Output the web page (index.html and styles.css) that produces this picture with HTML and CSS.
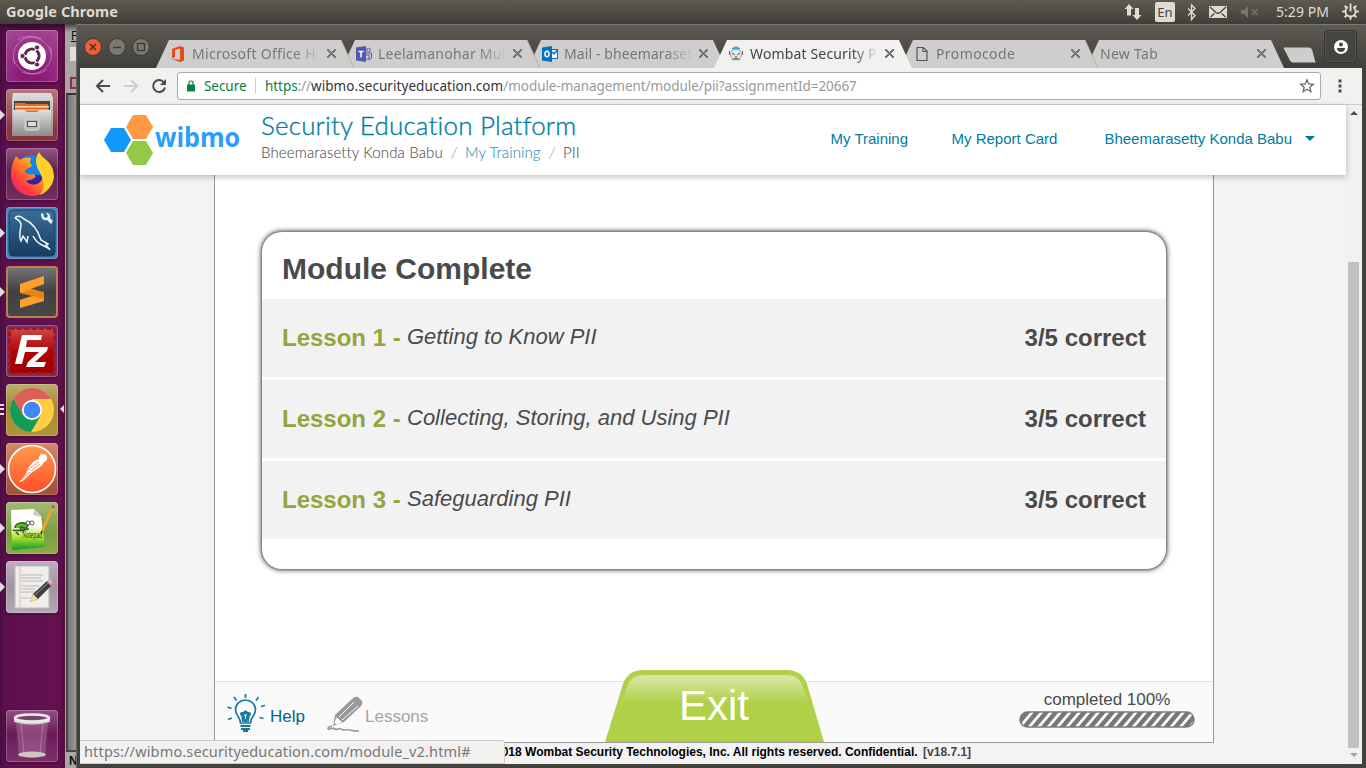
FILE: index.html
```html
<!DOCTYPE html>
<html lang="en">
<head>
<meta charset="utf-8">
<title>Wombat Security Platform</title>
<link rel="stylesheet" href="styles.css">
</head>
<body>
<div class="desktop">
  <header class="panel">
    <span class="panel-title">Google Chrome</span>
    <div class="tray">
      <svg class="net" width="18" height="18" viewBox="0 0 18 18"><path d="M5 1 0.500 6H3v6.500h4V6h2.500zM13 17l4.500-5H15V5h-4v7H8.500z" fill="#dfdbd2"/></svg>
      <span class="lang">En</span>
      <svg class="bt" width="10" height="18" viewBox="0 0 10 18"><path d="M1 5.500l7 7-3.500 4V2L8 5.500l-7 7" fill="none" stroke="#dfdbd2" stroke-width="1.400"/></svg>
      <svg class="mail" width="18" height="12" viewBox="0 0 18 12"><rect width="18" height="12" rx="1" fill="#dfdbd2"/><path d="M1 1l6 5.500q2 1.500 4 0L17 1M1.500 11l4-3.500M16.500 11l-4-3.500" fill="none" stroke="#45443f" stroke-width="1.300"/></svg>
      <svg class="mute" width="18" height="12" viewBox="0 0 18 12"><path d="M0 4h3l4-4v12L3 8H0z" fill="#77756d"/><path d="M11 3.500l5.500 5.500M16.500 3.500L11 9" stroke="#77756d" stroke-width="1.500"/></svg>
      <span class="clock">5:29 PM</span>
      <svg class="gear" width="17" height="17" viewBox="-8.500 -8.500 17 17"><circle r="5" fill="none" stroke="#dfdbd2" stroke-width="1.800"/><path d="M3.800-3.800l2-2M5.500 0H8.300M3.800 3.800l2 2M0 5.500V8.300M-3.800 3.800l-2 2M-5.500 0h-2.800M-3.800-3.800l-2-2" stroke="#dfdbd2" stroke-width="2"/><path d="M0-8V-2" stroke="#4f4d45" stroke-width="5"/><path d="M0-8V0" stroke="#dfdbd2" stroke-width="2"/></svg>
    </div>
  </header>

  <div class="workspace">
    <nav class="launcher">
      <div class="tile dash"><svg viewBox="0 0 52 52"><g fill="none" stroke="#e9b9df" stroke-opacity=".45" stroke-width="1"><path d="M9 34C2 16 20 1 36 9M44 17c7 18-12 32-28 25M12 10c12-9 32 1 33 14M41 39c-14 12-31 0-34-10"/></g><circle cx="26" cy="26" r="14" fill="#fff"/><circle cx="26" cy="26" r="7" fill="none" stroke="#5e2750" stroke-width="3.200"/><g stroke="#fff" stroke-width="1.500"><path d="M26 26H14M26 26l6-10M26 26l6 10"/></g><circle cx="26" cy="26" r="5.500" fill="#fff"/><g fill="#5e2750" stroke="#fff" stroke-width=".8"><circle cx="16.500" cy="26" r="2.500"/><circle cx="31" cy="17.500" r="2.500"/><circle cx="31" cy="34.500" r="2.500"/></g></svg></div>
      <div class="tile files run"><svg viewBox="0 0 52 52"><defs><linearGradient id="steel" x2="0" y2="1"><stop stop-color="#dedede"/><stop offset="1" stop-color="#8c8c8c"/></linearGradient></defs><path d="M7 4h38l2 5v38H6V9z" fill="url(#steel)"/><path d="M8 12h36v12H8z" fill="#454545"/><path d="M9 14h10l1 1h22v8H9z" fill="#e36b2b"/><path d="M9 17h34v1.500H9z" fill="#ffd49b"/><path d="M9 20h34v2H9z" fill="#f4a04f"/><path d="M7 21h11l3 2h10l3-2h11v26H7z" fill="url(#steel)"/><rect x="19" y="30" width="14" height="11" rx="2" fill="#b8b8b8" stroke="#ddd"/><rect x="21.500" y="32.500" width="9" height="5" fill="#ddd" stroke="#555"/></svg></div>
      <div class="tile firefox"><svg viewBox="0 0 52 52"><defs><linearGradient id="fox" x1="1" x2="0" y2="1"><stop stop-color="#fff44f"/><stop offset=".4" stop-color="#ff9a20"/><stop offset=".72" stop-color="#ff3b43"/><stop offset="1" stop-color="#e31587"/></linearGradient></defs><circle cx="26" cy="26" r="19" fill="#1683e5"/><path d="M21 27h14l3 7-9 7-9-5z" fill="#32249b"/><path d="M10 8l4 4c4-3 8-3 11-2l-1 4 2 4c-2 2-6 2-7 5 0 3 5 4 8 3l3 2c-2 4-7 4-10 5 5 6 14 4 16-2 2-8-6-14-4-23 13 4 16 14 15 21-2 11-10 19-21 19S5 39 5 27c0-8 2-13 5-19z" fill="url(#fox)"/><path d="M33 4c4 8 15 10 15 25-1 9-7 15-14 18 7-10 2-18-1-24-4-7-4-13 0-19z" fill="#ffcf2a"/></svg></div>
      <div class="tile mysql run"><svg viewBox="0 0 52 52"><defs><linearGradient id="sea" x2="0" y2="1"><stop stop-color="#3b6e98"/><stop offset="1" stop-color="#143c60"/></linearGradient></defs><rect x="3" y="3" width="46" height="46" rx="4" fill="url(#sea)" stroke="#174165"/><path d="M9 11c2-3 6-2 9 1 9 4 14 11 17 21l7 4-2 1 4 5M44 42l-8-4c-4-2-7-5-9-9M9 11c2 1 5 3 6 6 0 6-3 11 0 17l2-5 4 6 1-6" fill="none" stroke="#edf7ff" stroke-width="1.500"/><path d="M37 6l1 4 2 1 2-2-2-3c3 0 5 2 4 5l3 3-2 3-4-4c-4 1-6-2-6-6z" fill="#e7f1f9"/></svg></div>
      <div class="tile sublime run"><svg viewBox="0 0 52 52"><path d="M14 34l24-8v9l-24 7z" fill="#ffa02d"/><path d="M14 20l24 6v7l-24-6z" fill="#e88414"/><path d="M14 18L38 10v8l-24 9z" fill="#ffa02d"/></svg></div>
      <div class="tile zilla"><svg viewBox="0 0 52 52"><defs><linearGradient id="red" x2="0" y2="1"><stop stop-color="#cf4444"/><stop offset=".5" stop-color="#b20606"/><stop offset="1" stop-color="#900"/></linearGradient></defs><rect x="4" y="4" width="44" height="44" fill="url(#red)"/><rect x="3.500" y="3.500" width="45" height="45" fill="none" stroke="#ad1414" stroke-width="3" stroke-dasharray="4.500 3"/><path d="M16 10h20l-1 5H21l-1 7h11l-1 5H19l-3 12H9z" fill="#fff"/><path d="M25 22h17l-1 4-12 11h11l-2 5H20l2-5 11-10h-9z" fill="#fff"/></svg></div>
      <div class="tile chrome run3 active"><svg viewBox="0 0 52 52"><circle cx="26" cy="26" r="22" fill="#ffcd40"/><path d="M7 15a22 22 0 0 1 38 0H26L15 32z" fill="#db6158"/><path d="M7 15a22 22 0 0 0 18 33l10-17-9 4-9-4z" fill="#119c59"/><circle cx="26" cy="26" r="10" fill="#fff"/><circle cx="26" cy="26" r="8.300" fill="#4285f4"/></svg></div>
      <div class="tile postman run"><svg viewBox="0 0 52 52"><defs><linearGradient id="post" x2="0" y2="1"><stop stop-color="#ff9a52"/><stop offset="1" stop-color="#ff4f24"/></linearGradient></defs><circle cx="26" cy="26" r="23.500" fill="url(#post)" stroke="#fff" stroke-width="1.600"/><circle cx="37" cy="15" r="4" fill="#fff"/><path d="M33 16c-6 1-11 8-13 15l-7 8 4-1 8-8c6-4 12-7 13-12z" fill="#fff"/><path d="M22 27l11-8M25 28l9-7M15 37l9-8" stroke="#ff6b32" stroke-width=".8" fill="none"/></svg></div>
      <div class="tile npp run"><svg viewBox="0 0 52 52"><defs><linearGradient id="grass" x2="0" y2="1"><stop offset=".4" stop-color="#fff"/><stop offset=".68" stop-color="#b3e437"/><stop offset="1" stop-color="#0a9b20"/></linearGradient></defs><path d="M5 8l23-1 7 7 4 31-33 3z" fill="url(#grass)"/><path d="M28 7l-1 6 8 2z" fill="#ccc"/><path d="M7 28c6 2 12-1 16-1M9 26c0-5 8-7 13-3l-2 4c-4 4-7 0-5-2l4 1M10 30l3 3" stroke="#2d5b16" stroke-width="1.500" fill="#62b735"/><circle cx="22" cy="21" r="2" fill="#fff" stroke="#333" stroke-width=".8"/><circle cx="26" cy="21" r="2" fill="#fff" stroke="#333" stroke-width=".8"/><text class="npp-word" x="16" y="36" textLength="20" lengthAdjust="spacingAndGlyphs">Notepad</text><path d="M36 30L47 4" stroke="#f1a32b" stroke-width="2.500"/><path d="M46.500 6l1-2.500" stroke="#b55" stroke-width="3"/><path d="M35 32l1-3" stroke="#433" stroke-width="1.500"/></svg></div>
      <div class="tile editor run"><svg viewBox="0 0 52 52"><rect x="9" y="5" width="34" height="42" fill="#eeeeec" stroke="#bbb"/><path d="M14 6v40" stroke="#e5a8a8" stroke-width=".8"/><path d="M15 14h22M15 17h20M15 20h22M15 25h18M15 28h14M15 31h16M15 37h9" stroke="#aaa" stroke-width=".8"/><path d="M24 41l3-8 14-13 4 5-13 13z" fill="#3d3d3d"/><path d="M24 41l3-8 5 5z" fill="#f3df9c"/><path d="M41 20l3-3 3 4-3 3z" fill="#e6a3d5"/><path d="M29 34l13-12" stroke="#999"/></svg></div>
      <div class="tile trash"><svg viewBox="0 0 52 52"><path d="M10 12h32l-3 34q-13 4-26 0z" fill="#c592ba" opacity=".35"/><ellipse cx="26" cy="44.500" rx="14" ry="3" fill="#c9c9c2"/><path d="M15 14l3 29M37 14l-3 29" stroke="#fff" opacity=".25"/><path d="M8 8v4q18 5 36 0V8z" fill="#d5d5d0"/><ellipse cx="26" cy="8" rx="17" ry="3.500" fill="#764270" stroke="#ededea" stroke-width="2.500"/></svg></div>
    </nav>

    <aside class="behind"><span class="behind-top">F</span><i class="behind-box"></i><i class="behind-icon"></i><i class="behind-body"></i><span class="behind-bottom">N</span></aside>

    <section class="window">
      <div class="titlebar">
        <div class="controls">
          <svg viewBox="0 0 18 18"><circle cx="9" cy="9" r="8.500" fill="#ec5e37" stroke="#3b3a36"/><path d="M6 6l6 6M12 6l-6 6" stroke="#45241b" stroke-width="1.400"/></svg>
          <svg viewBox="0 0 18 18"><circle cx="9" cy="9" r="8.500" fill="#7a7871" stroke="#3b3a36"/><path d="M5 9.500h8" stroke="#3b3a36" stroke-width="1.300"/></svg>
          <svg viewBox="0 0 18 18"><circle cx="9" cy="9" r="8.500" fill="#7a7871" stroke="#3b3a36"/><rect x="5.500" y="5.500" width="7" height="7" fill="none" stroke="#3b3a36" stroke-width="1.300"/></svg>
        </div>
        <div class="tabs">
          <div class="tab t1"><svg class="shape" viewBox="0 0 198 28"><path d="M0 28L13 0H185L198 28z"/><path class="edge" d="M185 0l13 28"/></svg><svg class="fav" viewBox="0 0 16 16"><path d="M2 3l8-3 4 1.500v13L10 16l-8-3 8 .800V2.500L5 4v7l-3 1.500z" fill="#e64a19"/></svg><span class="label l1">Microsoft Office H</span><b class="x"></b></div>
          <div class="tab t2"><svg class="shape" viewBox="0 0 198 28"><path d="M0 28L13 0H185L198 28z"/><path class="edge" d="M185 0l13 28"/></svg><svg class="fav" viewBox="0 0 16 16"><path d="M0 1.500L10 0v16L0 14.500z" fill="#5558af"/><path d="M2.500 5.500h5M5 5.500v6" stroke="#fff" stroke-width="1.500"/><circle cx="12.500" cy="4" r="1.800" fill="none" stroke="#5558af"/><path d="M10 7h5.500v5q-2 2-5 1M10 9h3v4" fill="none" stroke="#5558af"/></svg><span class="label l2">Leelamanohar Mul</span><b class="x"></b></div>
          <div class="tab t3"><svg class="shape" viewBox="0 0 198 28"><path d="M0 28L13 0H185L198 28z"/></svg><svg class="fav" viewBox="0 0 16 16"><path d="M0 1.500L10 0v16L0 14.500z" fill="#0072c6"/><ellipse cx="5" cy="8" rx="2" ry="2.800" fill="none" stroke="#fff" stroke-width="1.500"/><path d="M10 3.500h5.500v9H10M10 6l2 2 3.500-4" fill="#fff" stroke="#0072c6" stroke-width="1.200"/></svg><span class="label l3">Mail - bheemaraset</span><b class="x"></b></div>
          <div class="tab t4 current"><svg class="shape" viewBox="0 0 198 28"><path d="M0 28L13 0H185L198 28z"/></svg><svg class="fav" viewBox="0 0 16 16"><circle cx="8" cy="8.500" r="5.500" fill="#e4e6e7" stroke="#a2a6a9"/><path d="M4 3Q5 1 8 1t4 2Q8 2 4 3" fill="#23a7df" stroke="#23a7df"/><path d="M4.500 7l2 2M11.500 7l-2 2M6 12l2 1 2-1M7.300 10.500h1.400" stroke="#333" fill="none"/><path d="M1.500 5v4M14.500 5v4M4 13l2 1M12 13l-2 1" stroke="#777" stroke-width="1.200"/></svg><span class="label l4">Wombat Security P</span><b class="x"></b></div>
          <div class="tab t5"><svg class="shape" viewBox="0 0 198 28"><path d="M0 28L13 0H185L198 28z"/><path class="edge" d="M185 0l13 28"/></svg><svg class="fav" viewBox="0 0 16 16"><path d="M3 1.500h6.500L13 5v9.500H3zM9 1.500V5.500h4" fill="none" stroke="#555" stroke-width="1.200"/></svg><span class="label l5">Promocode</span><b class="x"></b></div>
          <div class="tab t6"><svg class="shape" viewBox="0 0 198 28"><path d="M0 28L13 0H185L198 28z"/></svg><span class="label l6">New Tab</span><b class="x"></b></div>
        </div>
        <svg class="newtab" width="33" height="16" viewBox="0 0 33 16"><path d="M1 .5h25q2 0 3 2L32.500 15.500H10q-2 0-3-2L.5 1z" fill="#cfcdcb"/></svg>
        <div class="profile"><svg width="14" height="14" viewBox="0 0 14 14"><circle cx="7" cy="7" r="7" fill="#fff"/><circle cx="7" cy="4.500" r="2" fill="#45443f"/><path d="M3 8h8v1q-1 3-4 3T3 9z" fill="#45443f"/></svg></div>
      </div>

      <div class="toolbar">
        <svg class="nav" viewBox="0 0 16 16"><path d="M15 8H2M8 2L2 8l6 6" fill="none" stroke="#4b4b4b" stroke-width="2"/></svg>
        <svg class="nav" viewBox="0 0 16 16"><path d="M1 8h13M8 2l6 6-6 6" fill="none" stroke="#cecece" stroke-width="2"/></svg>
        <svg class="nav" viewBox="0 0 16 16"><path d="M13 4.500A6 6 0 1 0 14 9.500" fill="none" stroke="#4b4b4b" stroke-width="2"/><path d="M15 1v6H9z" fill="#4b4b4b"/></svg>
        <div class="omnibox">
          <svg class="lock" width="8" height="12" viewBox="0 0 8 12"><path d="M2 6V3q0-2 2-2t2 2v3" fill="none" stroke="#0b8043" stroke-width="1.200"/><rect y="4.500" width="8" height="7" rx=".8" fill="#0b8043"/></svg>
          <span class="secure">Secure</span><i class="divider"></i>
          <span class="url"><span class="scheme">https</span>://<span class="host">wibmo.securityeducation.com</span>/module-management/module/pii?assignmentId=20667</span>
          <svg class="star" width="16" height="16" viewBox="0 0 16 16"><path d="M8 1.800l1.700 4.200 4.600.3-3.500 2.900 1.100 4.500L8 11.300l-3.900 2.400 1.100-4.500-3.500-2.900 4.600-.3z" fill="none" stroke="#6a6a6a" stroke-width="1.300"/></svg>
        </div>
        <svg class="more" width="4" height="14" viewBox="0 0 4 14"><path d="M.5.500h3v3h-3zM.5 5.500h3v3h-3zM.5 10.500h3v3h-3z" fill="#4b4b4b"/></svg>
      </div>

      <div class="viewport">
        <main class="page">
          <header class="site-header">
            <svg class="logo" width="138" height="52" viewBox="0 0 138 52"><path d="M8 14h13l7 12-7 12H8L1 26z" fill="#1198fb"/><path d="M30 1h13l7 12-7 12H30l-7-12z" fill="#ff9944"/><path d="M30 27h13l7 12-7 12H30l-7-12z" fill="#93c947"/><text class="wordmark" x="52" y="33" textLength="85" lengthAdjust="spacingAndGlyphs">wibmo</text></svg>
            <div class="brand">
              <div class="brand-title">Security Education Platform</div>
              <div class="crumbs"><span class="c1">Bheemarasetty Konda Babu</span><i>/</i><a class="c2">My Training</a><i>/</i><span class="c3">PII</span></div>
            </div>
            <nav class="menu"><a>My Training</a><a>My Report Card</a><a class="user">Bheemarasetty Konda Babu<i class="caret"></i></a></nav>
          </header>
          <div class="module">
            <section class="results">
              <h1>Module Complete</h1>
              <div class="lesson"><strong>Lesson 1 -</strong><em>Getting to Know PII</em><b>3/5 correct</b></div>
              <div class="lesson"><strong>Lesson 2 -</strong><em>Collecting, Storing, and Using PII</em><b>3/5 correct</b></div>
              <div class="lesson"><strong>Lesson 3 -</strong><em>Safeguarding PII</em><b>3/5 correct</b></div>
            </section>
            <footer class="module-bar">
              <svg class="bulb" width="40" height="40" viewBox="0 0 40 40"><g fill="none" stroke="#177a9d" stroke-width="1.700"><path d="M14.500 30c0-6-5-7-5-13.500a10 9.500 0 0 1 20 0c0 6.500-5 7.500-5 13.500z"/><path d="M17 29l-1-8M22 29l1-8M17 19l2 10M22 19l-2 10"/><path d="M14.500 33h10M15 36h9M17 38h5" stroke-width="2"/><path d="M19.500 1v4M8 4l2.500 3.500M32.500 4L30 7.500M1.500 14l4 1.500M35 13.500l4-1M2 26.500l4-1.500M33.500 24.500l4 1"/></g><g fill="#177a9d"><circle cx="16" cy="21" r="2"/><circle cx="19.500" cy="19.500" r="2"/><circle cx="23" cy="21" r="2"/></g></svg>
              <a class="help">Help</a>
              <svg class="pencil" width="36" height="36" viewBox="0 0 36 36"><path d="M8 19L25 3q3-3 6-2l4 4q1 3-1 5L17 26 6 30z" fill="#999"/><path d="M12 21L27 6M15 24L31 10" stroke="#fafafa" stroke-width="1"/><path d="M9 21.500l-1.500 5.500 2 1.500 5.500-2q-.500-2-2.500-2.500-1-2-3.500-2.500z" fill="#fafafa"/><path d="M5 30c-5 1-5 4-2 3 5-3 4 2 8 0 3-2 3 2 7 1 4-1 6 1 14 1" fill="none" stroke="#999" stroke-width="1.600"/></svg>
              <a class="lessons">Lessons</a>
              <a class="exit"><svg width="219" height="72" viewBox="0 0 219 72"><defs><linearGradient id="gloss" x2="0" y2="1"><stop offset=".1" stop-color="#d5e59f"/><stop offset=".85" stop-color="#b0d047"/></linearGradient></defs><path d="M0 72L18 14Q23 0 38 0h144q15 0 20 14l17 58z" fill="#b0d047"/><path d="M16 34l6-17Q26 5 38 5h144q12 0 16 12l6 17v4H16z" fill="url(#gloss)"/></svg><span>Exit</span></a>
              <div class="progress"><span>completed 100%</span><svg width="176" height="17" viewBox="0 0 176 17"><defs><pattern id="stripes" width="9.450" height="17" patternUnits="userSpaceOnUse" patternTransform="skewX(-40)"><rect width="9.450" height="17" fill="#777"/><rect width="3.600" height="17" x="3" fill="#fff"/></pattern></defs><rect x="1" y="1" width="174" height="15" rx="7.500" fill="url(#stripes)" stroke="#7b7b7b" stroke-width="1.500"/></svg></div>
            </footer>
          </div>
          <div class="copyright"><b>2018 Wombat Security Technologies, Inc. All rights reserved. Confidential.</b><b class="version">[v18.7.1]</b></div>
        </main>
        <div class="scroll"><i class="up"></i><i class="thumb"></i><i class="down"></i></div>
        <div class="status">https://wibmo.securityeducation.com/module_v2.html#</div>
      </div>
    </section>
  </div>
</div>
</body>
</html>
```
FILE: styles.css
```css
* { box-sizing: border-box; }
body { margin: 0; overflow: hidden; font-family: "Liberation Sans", Arial, sans-serif; }
.desktop { width: 1366px; height: 768px; display: flex; flex-direction: column; background: #3f3e3a; }
.panel { height: 24px; display: flex; align-items: center; justify-content: space-between; padding: 0 7px 2px 6px; background: linear-gradient(#5d5a50, #3f3e39); color: #dfdbd2; font-family: "Noto Sans", sans-serif; font-size: 14px; }
.panel-title { font-weight: 700; font-size: 14.5px; letter-spacing: .05px; }
.tray { display: flex; align-items: center; padding-top: 1px; }
.lang { width: 20px; height: 20px; margin: 0 12px 0 13px; border-radius: 2px; background: #dfdbd2; color: #45443f; font-size: 13px; line-height: 20px; text-align: center; }
.bt { margin-right: 12px; }
.mail { margin-right: 14px; }
.mute { margin-right: 17px; }
.clock { width: 53px; margin-right: 13px; letter-spacing: .05px; white-space: nowrap; }
.workspace { flex: 1; display: flex; min-height: 0; }

.launcher { width: 65px; padding: 6px 0 6px 6px; display: flex; flex-direction: column; gap: 7px; background: linear-gradient(90deg, #5a104d, #67114f); border-right: 1px solid #521046; box-shadow: inset 0 4px 5px #370a30; }
.tile { position: relative; width: 52px; height: 52px; flex: none; border-radius: 4px; box-shadow: inset 0 0 0 1px rgba(255,255,255,.22), 0 1px 3px rgba(0,0,0,.35); }
.tile svg { display: block; width: 52px; height: 52px; }
.dash { background: radial-gradient(circle at 50% 90%, #8c1b77 20%, #a64b94); }
.files { background: linear-gradient(#b7787b, #8a343e 80%); }
.firefox { background: linear-gradient(#90577f, #602050 45%, #72305f); }
.mysql { background: #4b83b5; }
.sublime { background: linear-gradient(#777, #414141 50%, #484848); box-shadow: inset 0 0 0 2px #b8824c; }
.zilla { background: #773268; }
.chrome { background: linear-gradient(#bcae70, #a68931 45%, #b0943a); }
.postman { background: linear-gradient(#d38b69, #a34e38); }
.npp { background: linear-gradient(#a2bb75, #7c9f3b 60%, #8aaa4b); }
.npp-word { font: 10px "Liberation Serif", serif; fill: #1c3208; }
.editor { background: linear-gradient(#bcaebb, #9f939f 50%, #b5a9b4); }
.trash { margin-top: auto; background: linear-gradient(#945084, #6a1c59 45%, #7c316b); }
.run::before { content: ""; position: absolute; left: -6px; top: 21px; border: 5px solid transparent; border-left-color: #ddd; border-right: 0; }
.run3::before { content: ""; position: absolute; left: -6px; top: 20px; width: 4px; height: 11px; background: repeating-linear-gradient(#ddd 0 2px, transparent 2px 4.5px); }
.active::after { content: ""; position: absolute; right: -6px; top: 21px; border: 4px solid transparent; border-right-color: #ddd; border-left: 0; }

.behind { width: 11px; display: flex; flex-direction: column; background: #aaa7a2; font-size: 12px; color: #111; }
.behind-top { height: 23px; padding: 5px 0 0 6px; text-decoration: underline; background: linear-gradient(#444, #aaa7a2 8px); }
.behind-box { height: 14px; margin-left: 5px; background: #deddda; }
.behind-icon { width: 6px; height: 12px; margin: 16px 0 4px 5px; border: 2px solid #853055; border-right: 0; background: #b592a0; }
.behind-body { flex: 1; margin-left: 1px; border-left: 2px solid #44443f; border-top: 2px solid #333; border-bottom: 2px solid #444; background: linear-gradient(90deg, #777, #999); }
.behind-bottom { height: 16px; padding-left: 4px; font-size: 12px; line-height: 18px; font-weight: 700; }

.window { position: relative; width: 1290px; display: flex; flex-direction: column; padding: 0 4px 4px 3px; background: #42413c; border-left: 1px solid #686761; }
.titlebar { height: 44px; margin: 0 -4px 0 -3px; padding-left: 7px; display: flex; align-items: flex-end; border-top: 1px solid #7b7971; background: linear-gradient(#5d5a52, #403f3a); }
.controls { display: flex; gap: 6px; align-self: flex-start; padding-top: 13px; width: 72px; }
.controls svg { width: 18px; height: 18px; flex: none; }
.tabs { display: flex; width: 1127px; }
.tab { position: relative; z-index: 1; flex: none; width: 198px; height: 28px; margin-right: -12px; padding: 0 18px 1px 14px; display: flex; align-items: center; font-family: "Noto Sans", sans-serif; font-size: 14px; color: #777; }
.t1 { z-index: 6; } .t2 { z-index: 5; } .t3 { z-index: 4; } .t4 { z-index: 8; } .t5 { z-index: 3; }
.shape { position: absolute; inset: 0; z-index: -1; width: 198px; height: 28px; overflow: visible; fill: #d0cecc; }
.shape .edge { fill: none; stroke: #b2b0ad; }
.current { color: #444; }
.current .shape { fill: #f2f1f0; }
.fav { width: 16px; height: 16px; margin-right: 6px; flex: none; }
.label { width: 128px; flex: none; white-space: nowrap; -webkit-mask-image: linear-gradient(90deg, #000 102px, transparent 129px); mask-image: linear-gradient(90deg, #000 102px, transparent 129px); }
.l1 { letter-spacing: .3px; }
.l2 { letter-spacing: .25px; }
.l3 { letter-spacing: .1px; }
.l4 { letter-spacing: .15px; }
.l5 { letter-spacing: .4px; }
.l6 { width: 150px; letter-spacing: .3px; }
.x { width: 9px; height: 9px; margin-left: 7px; flex: none; background: linear-gradient(45deg, transparent 44%, #777 44% 56%, transparent 56%), linear-gradient(-45deg, transparent 44%, #777 44% 56%, transparent 56%); }
.newtab { margin-bottom: 5px; }
.profile { width: 33px; height: 33px; margin: 0 0 5px 8px; display: grid; place-items: center; border: 1px solid #35342f; border-radius: 4px; background: #45443f; box-shadow: inset 0 0 0 1px #54524b; }

.toolbar { height: 37px; display: flex; align-items: center; padding: 0 20px 0 15px; background: #f2f1f0; border-bottom: 1px solid #ccc; }
.nav { width: 16px; height: 16px; margin-right: 12px; flex: none; }
.omnibox { flex: none; width: 1144px; height: 28px; margin-left: -2px; padding: 0 5px 0 9px; display: flex; align-items: center; border: 1px solid #aaa; border-radius: 3px; background: #fff; color: #999; font-family: "Noto Sans", sans-serif; font-size: 13.5px; }
.lock { margin-right: 9px; }
.secure { width: 43px; margin-right: 8px; color: #0b8043; letter-spacing: -.05px; white-space: nowrap; }
.divider { width: 1px; height: 16px; margin-right: 9px; background: #ccc; }
.url { white-space: nowrap; letter-spacing: -.06px; }
.scheme { color: #0b8043; }
.host { color: #333; letter-spacing: .06px; }
.star { margin-left: auto; }
.more { margin-left: 16.5px; }

.viewport { position: relative; flex: 1; display: flex; min-height: 0; background: #f3f3f3; }
.page { width: 1266px; display: flex; flex-direction: column; }
.site-header { position: relative; z-index: 2; height: 70px; flex: none; display: flex; align-items: flex-start; background: #fff; box-shadow: 0 2px 6px rgba(0,0,0,.25); }
.logo { margin: 9px 20px 0 23px; }
.wordmark { font: 700 26px "Open Sans", "Noto Sans", sans-serif; fill: #2b9dfc; }
.brand { width: 500px; padding-top: 3px; font-family: "Lato", sans-serif; white-space: nowrap; }
.brand-title { height: 35px; line-height: 34px; font-size: 26px; font-weight: 300; letter-spacing: .18px; color: #007da5; -webkit-text-stroke: .35px #007da5; }
.crumbs { display: flex; height: 20px; line-height: 19px; font-size: 15px; font-weight: 300; letter-spacing: .12px; color: #555; -webkit-text-stroke: .12px; }
.crumbs i { width: 22px; text-align: center; color: #aaa; }
.crumbs a { color: #3694b5; }
.c1 { width: 182px; } .c2 { width: 76px; }
.menu { display: flex; padding-top: 25px; font-size: 15px; line-height: 18px; color: #007ba4; white-space: nowrap; margin-left: 69.5px; }
.menu a { margin-right: 43.5px; }
.menu .user { display: flex; align-items: center; margin: 0 0 0 3.5px; }
.caret { margin: -2px 0 0 13px; border: 5px solid transparent; border-top-color: #007ba4; border-bottom: 0; }
.module { width: 1000px; height: 568px; margin-left: 134px; display: flex; flex-direction: column; justify-content: space-between; background: #fff; border: 1px solid #999; border-top: 0; }
.results { width: 904px; height: 337px; margin: 57px 0 0 47px; border-radius: 20px; background: #fff; box-shadow: 0 0 1px .5px #888, 0 0 5px 1px #444; }
.results h1 { height: 67px; margin: 0; padding: 0 20px; font-size: 30px; line-height: 74px; color: #4a4a4a; }
.lesson { height: 78px; margin-bottom: 3px; padding: 0 20px; display: flex; align-items: center; background: #f2f2f2; color: #4a4a4a; }
.lesson strong { width: 125px; color: #95a43c; font-size: 24px; }
.lesson em { font-size: 22px; padding-bottom: 3px; }
.lesson b { margin-left: auto; font-size: 24px; }
.module-bar { position: relative; height: 61px; display: flex; align-items: flex-start; padding: 11px 18px 0 11px; border-top: 1px solid #e0e0e0; background: #fafafa; }
.help, .lessons { padding-top: 14px; font-size: 17px; line-height: 19px; color: #006691; }
.help { width: 57px; margin-left: 4px; }
.lessons { margin-left: 2px; color: #a5a5a5; }
.pencil { margin-top: 3px; }
.exit { position: absolute; left: 390px; top: -12px; width: 219px; height: 72px; color: #fff; font-size: 42px; }
.exit svg { display: block; }
.exit span { position: absolute; left: 74px; top: 13px; line-height: 46px; }
.progress { margin-left: auto; width: 176px; text-align: center; font-size: 17px; line-height: 17px; color: #4a4a4a; display: flex; flex-direction: column; align-items: center; gap: 3px; margin-top: -2px; }
.copyright { display: flex; margin-left: 415px; padding-top: 2px; font-size: 12px; line-height: 14px; color: #000; white-space: nowrap; }
.version { margin-left: 5.5px; color: #444; }
.scroll { width: 16px; display: flex; flex-direction: column; align-items: center; background: #f1f1f1; }
.up { margin-top: 6px; border: 4px solid transparent; border-bottom-color: #505050; border-top: 0; }
.thumb { width: 11px; height: 486px; margin: 147px 1px 0 0; background: #c1c1c1; }
.down { margin-top: 5px; border: 4px solid transparent; border-top-color: #a3a3a3; border-bottom: 0; }
.status { position: absolute; z-index: 3; left: 0; bottom: 0; width: 425px; height: 24px; padding-left: 4px; border: 1px solid #ccc; border-left: 0; border-radius: 0 3px 0 0; background: #f2f1f0; font: 14.5px/21px "Noto Sans", sans-serif; letter-spacing: .15px; color: #777; white-space: nowrap; }
```
